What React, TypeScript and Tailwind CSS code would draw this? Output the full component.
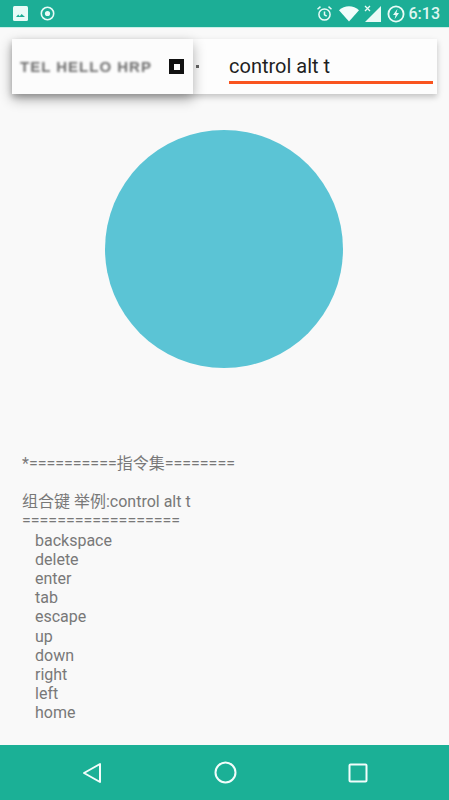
const COMMANDS = ["backspace", "delete", "enter", "tab", "escape", "up", "down", "right", "left", "home"];

function StatusBar() {
  return (
    <div className="flex h-[28px] items-center justify-between border-b border-[#c9efe8] bg-[#1cae96] pl-[13px] pr-[9px] text-white">
      <div className="flex items-center gap-[12px]">
        <svg width="15" height="15" viewBox="0 0 15 15">
          <rect width="15" height="15" rx="1.5" fill="#e8fbf7" />
          <path d="M3 11l2.2-2.4 1.6 1.6 1.8-2.2L12 11z" fill="#1cae96" />
        </svg>
        <svg width="15" height="15" viewBox="0 0 15 15" fill="none" stroke="#e8fbf7">
          <circle cx="7.5" cy="7.5" r="6.2" strokeWidth="1.6" />
          <circle cx="7.5" cy="7.5" r="2.6" fill="#e8fbf7" stroke="none" />
        </svg>
      </div>
      <div className="flex items-center gap-[4px]">
        <svg width="17" height="17" viewBox="0 0 17 17" fill="none" stroke="#e8fbf7" strokeWidth="1.5">
          <circle cx="8.5" cy="9.5" r="5.6" />
          <path d="M8.5 6.5v3.3l2.2 1.4M1.5 4.2l3-2.6M15.5 4.2l-3-2.6" />
        </svg>
        <svg className="ml-[2px]" width="20" height="16" viewBox="0 0 20 16">
          <path d="M0 4.2C5.5-1 14.5-1 20 4.2L10 15.5z" fill="#f2fdfb" />
        </svg>
        <svg className="ml-[1px]" width="18" height="18" viewBox="0 0 18 18">
          <path d="M17 1v16H1z" fill="#eafbf7" />
          <path d="M1 1l5 5M6 1L1 6" stroke="#eafbf7" strokeWidth="1.3" />
        </svg>
        <svg className="ml-[1px]" width="18" height="18" viewBox="0 0 18 18" fill="none">
          <circle cx="9" cy="9" r="7.6" stroke="#eafbf7" strokeWidth="1.8" />
          <path d="M10.5 3.8L6 10h2.6l-1 4.2L12 8H9.4z" fill="#eafbf7" />
        </svg>
        <span className="font-['Roboto',sans-serif] text-[16px] font-medium leading-none text-[#dff6f1]">6:13</span>
      </div>
    </div>
  );
}

function SearchRow() {
  return (
    <div className="relative mx-[12px] mt-[11px] flex h-[55px] bg-[#fdfdfd] shadow-[0_3px_6px_rgba(0,0,0,0.22)]">
      <div className="relative z-10 flex w-[181px] shrink-0 items-center bg-[#fcfcfc] pl-[8px] shadow-[0_5px_12px_rgba(0,0,0,0.32)]">
        <span className="w-[150px] whitespace-nowrap font-['Liberation_Sans',sans-serif] text-[15px] font-bold leading-none tracking-[1px] text-[#707070] blur-[1.2px]">TEL HELLO HRP</span>
        <span className="-ml-[1px] flex h-[15px] w-[15px] items-center justify-center bg-[#111] blur-[0.6px]">
          <span className="h-[6px] w-[6px] bg-white" />
        </span>
      </div>
      <span className="ml-[3px] mt-[26px] h-[3px] w-[3px] bg-[#666] blur-[0.3px]" />
      <div className="ml-[30px] flex w-[204px] flex-col">
        <div className="mt-[13px] h-[28px] font-['Roboto',sans-serif] text-[20px] leading-[28px] text-[#1f1f1f]">control alt t</div>
        <div className="mt-[1px] h-[3px] bg-[#f9541f]" />
      </div>
    </div>
  );
}

function HelpText() {
  return (
    <div className="pl-[22px] font-['Roboto','Noto_Sans_CJK_SC',sans-serif] text-[16px] leading-[19.2px] text-[#787878]">
      <div>*==========指令集========</div>
      <div className="h-[19px]" />
      <div>组合键 举例:control alt t</div>
      <div>==================</div>
      {COMMANDS.map((cmd) => (
        <div key={cmd} className="pl-[13px]">{cmd}</div>
      ))}
    </div>
  );
}

function NavBar() {
  return (
    <div className="flex h-[55px] items-center bg-[#1bb096] pl-[82px] pr-[81px]">
      <svg width="20" height="22" viewBox="0 0 20 22" fill="none" stroke="#f2fdfb" strokeWidth="2" strokeLinejoin="round">
        <path d="M18 2v18L2 11z" />
      </svg>
      <svg className="ml-[112px]" width="23" height="23" viewBox="0 0 23 23" fill="none" stroke="#f2fdfb" strokeWidth="2">
        <circle cx="11.5" cy="11.5" r="10" />
      </svg>
      <svg className="ml-auto" width="20" height="20" viewBox="0 0 20 20" fill="none" stroke="#f2fdfb" strokeWidth="2" strokeLinejoin="round">
        <rect x="1.5" y="1.5" width="17" height="17" rx="1" />
      </svg>
    </div>
  );
}

export default function App() {
  return (
    <div className="flex h-[800px] w-[449px] flex-col overflow-hidden bg-[#f9f9f9]">
      <StatusBar />
      <SearchRow />
      <div className="mt-[36px] flex justify-center pr-[1px]">
        <div className="h-[238px] w-[238px] rounded-full bg-[#5bc4d5]" />
      </div>
      <div className="mt-[86px] flex-1">
        <HelpText />
      </div>
      <NavBar />
    </div>
  );
}
